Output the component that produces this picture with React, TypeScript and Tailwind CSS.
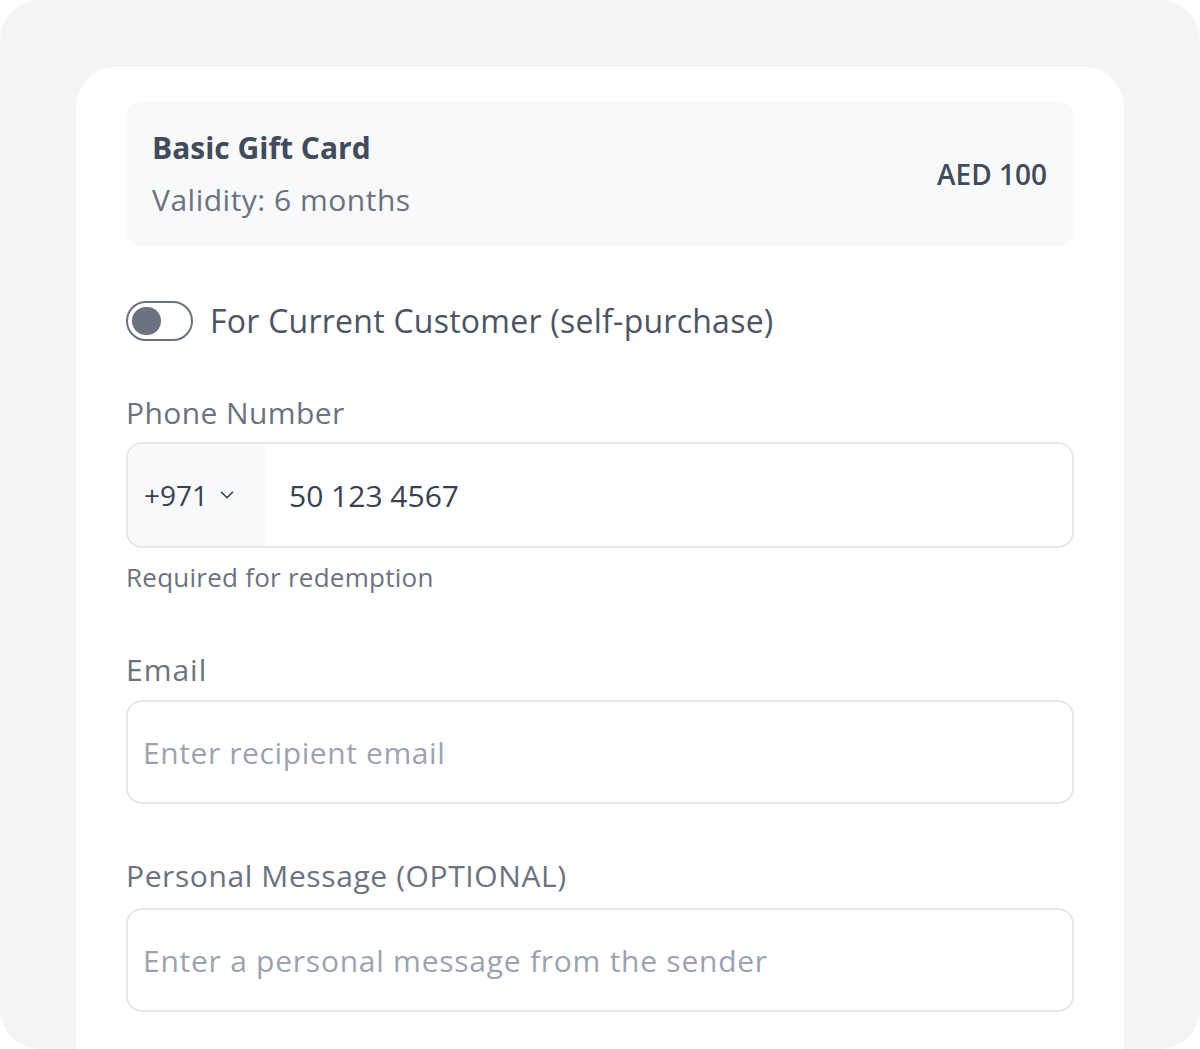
import React from 'react';
import { ChevronDown } from 'lucide-react';

const font = { fontFamily: '"Open Sans", "Noto Sans", sans-serif' };

const App: React.FC = () => {
  return (
    <div className="h-[1049px] w-[1200px] bg-white overflow-hidden" style={font}>
      <div className="h-full w-full rounded-[40px] bg-[#f3f4f6] px-[76px] pt-[67px] overflow-hidden">
        <div className="h-[1100px] rounded-t-[40px] bg-white px-[50px] pt-[34px]">
          {/* Gift card summary */}
          <div className="flex h-[146px] items-center justify-between rounded-[16px] bg-[#f8f9fa] pl-[26px] pr-[27px]">
            <div className="flex flex-col">
              <span className="text-[30px] font-bold leading-[40px] text-[#414b59]">Basic Gift Card</span>
              <span className="mt-[12px] text-[30px] leading-[40px] tracking-[0.5px] text-[#6b7280]">Validity: 6 months</span>
            </div>
            <span className="text-[28px] font-semibold text-[#414b59]">AED 100</span>
          </div>

          {/* Self-purchase toggle */}
          <div className="mt-[50px] flex items-center gap-[17px]">
            <div className="flex h-[40px] w-[67px] items-center rounded-full border-2 border-[#6b7280] bg-white px-[4px]">
              <div className="h-[28px] w-[29px] rounded-full bg-[#6b7280]" />
            </div>
            <span className="text-[32px] font-medium tracking-[0.25px] text-[#4b5563]">For Current Customer (self-purchase)</span>
          </div>

          {/* Phone */}
          <div className="mt-[48px]">
            <label className="block text-[30px] leading-[40px] tracking-[0.4px] text-[#6b7280]">Phone Number</label>
            <div className="mt-[9px] flex h-[106px] overflow-hidden rounded-[16px] border-2 border-[#e5e7eb]">
              <div className="flex w-[137px] items-center gap-[8px] bg-[#f8f9fa] pl-[16px]">
                <span className="text-[28px] text-[#374151]">+971</span>
                <ChevronDown size={22} strokeWidth={1.75} className="text-[#374151]" />
              </div>
              <div className="flex flex-1 items-center pl-[24px] text-[30px] font-medium text-[#374151]">50 123 4567</div>
            </div>
            <p className="mt-[12px] text-[26px] leading-[34px] tracking-[0.25px] text-[#6b7280]">Required for redemption</p>
          </div>

          {/* Email */}
          <div className="mt-[56px]">
            <label className="block text-[30px] leading-[40px] tracking-[1px] text-[#6b7280]">Email</label>
            <div className="mt-[10px] flex h-[104px] items-center rounded-[16px] border-2 border-[#e5e7eb] pl-[15px]">
              <span className="text-[30px] tracking-[0.6px] text-[#9ca3af]">Enter recipient email</span>
            </div>
          </div>

          {/* Personal message */}
          <div className="mt-[52px]">
            <label className="block text-[30px] leading-[40px] tracking-[0.6px] text-[#6b7280]">Personal Message (OPTIONAL)</label>
            <div className="mt-[12px] flex h-[104px] items-center rounded-[16px] border-2 border-[#e5e7eb] pl-[15px]">
              <span className="text-[30px] tracking-[0.75px] text-[#9ca3af]">Enter a personal message from the sender</span>
            </div>
          </div>
        </div>
      </div>
    </div>
  );
};

export default App;
